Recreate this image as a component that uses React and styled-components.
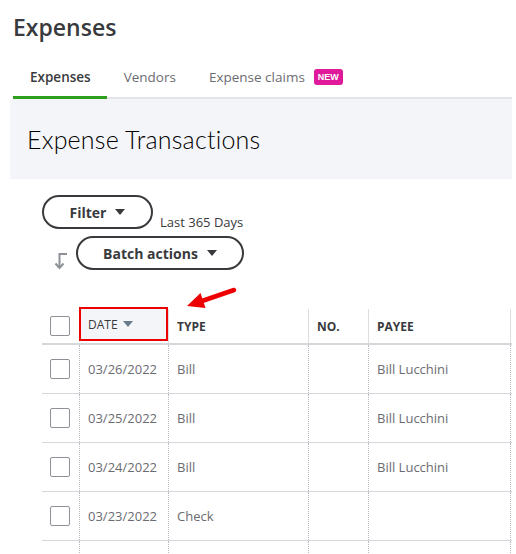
import React from "react"
import styled, { createGlobalStyle } from "styled-components"

const GlobalStyle = createGlobalStyle`
  body {
    margin: 0;
    background: #fff;
    font-family: "Open Sans", "Liberation Sans", sans-serif;
    color: #393a3d;
  }
`

const rows = [
  { date: "03/26/2022", type: "Bill", no: "", payee: "Bill Lucchini" },
  { date: "03/25/2022", type: "Bill", no: "", payee: "Bill Lucchini" },
  { date: "03/24/2022", type: "Bill", no: "", payee: "Bill Lucchini" },
  { date: "03/23/2022", type: "Check", no: "", payee: "" },
  { date: "", type: "", no: "", payee: "" },
]

const columns = "37px 89px 140px 60px 142px 1fr"

const Page = styled.div`
  position: relative;
  width: 516px;
  height: 554px;
  overflow: hidden;
`
const PageTitle = styled.h1`
  margin: 0;
  padding: 12px 0 0 13px;
  height: 42px;
  box-sizing: border-box;
  font-size: 23px;
  font-weight: 600;
  line-height: 30px;
  color: #393a3d;
`
const TabBar = styled.div`
  display: flex;
  align-items: stretch;
  margin: 16px 4px 0 13px;
  border-bottom: 2px solid #e3e5e8;
  height: 41px;
  box-sizing: border-box;
`
const Tab = styled.div`
  display: flex;
  align-items: center;
  gap: 9px;
  padding: 0 16px 0 17px;
  font-size: 13.5px;
  font-weight: ${p => (p.$active ? 600 : 400)};
  color: ${p => (p.$active ? "#393a3d" : "#6b6c72")};
  border-bottom: ${p => (p.$active ? "3px solid #2ca01c" : "3px solid transparent")};
  margin-bottom: -2px;
`
const NewBadge = styled.span`
  background: #e0199b;
  color: #fff;
  font-size: 9px;
  font-weight: 700;
  line-height: 16px;
  padding: 0 4px;
  border-radius: 3px;
  font-family: "Liberation Sans", Arial, sans-serif;
`
const Banner = styled.div`
  margin: 0 4px 0 10px;
  height: 80px;
  background: #f4f5f8;
  display: flex;
  align-items: center;
  padding-left: 17px;
`
const BannerTitle = styled.h2`
  margin: 0;
  font-family: Lato, "Open Sans", sans-serif;
  font-size: 25px;
  font-weight: 300;
  color: #000;
  letter-spacing: 0.2px;
`
const Controls = styled.div`
  display: flex;
  flex-direction: column;
  gap: 7px;
  padding: 16px 0 0 42px;
`
const ControlRow = styled.div`
  display: flex;
  align-items: ${p => p.$align || "center"};
  gap: ${p => p.$gap || 9}px;
`
const PillButton = styled.button`
  display: flex;
  align-items: center;
  justify-content: center;
  gap: 9px;
  width: ${p => p.$width}px;
  height: 34px;
  border: 2px solid #393a3d;
  border-radius: 17px;
  background: #fff;
  font-family: "Open Sans", sans-serif;
  font-size: 14px;
  font-weight: 700;
  color: #393a3d;
  padding: 0;
`
const Caret = styled.span`
  width: 0;
  height: 0;
  border-left: 5px solid transparent;
  border-right: 5px solid transparent;
  border-top: 6px solid ${p => p.$color || "#393a3d"};
`
const RangeLabel = styled.span`
  font-size: 13px;
  color: #393a3d;
  margin-bottom: -2px;
`
const SortIcon = styled.svg`
  margin: 16px 0 0 12px;
  flex-shrink: 0;
`
const Table = styled.div`
  margin: 37px 4px 0 42px;
`
const HeaderRow = styled.div`
  display: grid;
  grid-template-columns: ${columns};
  height: 38px;
  border-bottom: 2px solid #d4d7dc;
  box-sizing: border-box;
`
const HeadCell = styled.div`
  display: flex;
  align-items: center;
  gap: 5px;
  padding-left: 8px;
  margin-top: 2px;
  font-size: 12px;
  font-weight: ${p => (p.$sorted ? 400 : 700)};
  color: #393a3d;
  border-left: ${p => (p.$first ? "none" : "1px solid #dcdee0")};
  ${p =>
    p.$sorted &&
    `
    background: #f4f5f8;
    outline: 2px solid #ee0000;
    outline-offset: -2px;
    margin-top: 0;
    margin-bottom: 2px;
  `}
`
const BodyRow = styled.div`
  display: grid;
  grid-template-columns: ${columns};
  height: 49px;
  border-bottom: 1px solid #d4d7dc;
  box-sizing: border-box;
`
const Cell = styled.div`
  display: flex;
  align-items: center;
  padding-left: 8px;
  font-size: 13px;
  color: #6b6c72;
  border-left: ${p => (p.$first ? "none" : "1px dotted #b9bbbf")};
`
const Checkbox = styled.span`
  width: 18px;
  height: 18px;
  border: 1px solid #8d9096;
  border-radius: 2px;
  background: #fff;
`
const Pointer = styled.svg`
  position: absolute;
  left: 180px;
  top: 283px;
`

const ArrowPointer = () => (
  <Pointer width="60" height="30" viewBox="0 0 60 30">
    <line x1="54" y1="7" x2="22" y2="18" stroke="#ee0000" strokeWidth="4.5" strokeLinecap="round" />
    <polygon points="7,23 25.5,25 20.5,10" fill="#ee0000" />
  </Pointer>
)

export default function App() {
  return (
    <Page>
      <GlobalStyle />
      <PageTitle>Expenses</PageTitle>
      <TabBar>
        <Tab $active>Expenses</Tab>
        <Tab>Vendors</Tab>
        <Tab>
          Expense claims <NewBadge>NEW</NewBadge>
        </Tab>
      </TabBar>
      <Banner>
        <BannerTitle>Expense Transactions</BannerTitle>
      </Banner>
      <Controls>
        <ControlRow $align="flex-end" $gap={7}>
          <PillButton $width={111}>
            Filter <Caret />
          </PillButton>
          <RangeLabel>Last 365 Days</RangeLabel>
        </ControlRow>
        <ControlRow $gap={8}>
          <SortIcon width="14" height="18" viewBox="0 0 14 18">
            <path d="M13 2H5.5V15" fill="none" stroke="#8d9096" strokeWidth="2" />
            <path d="M1.5 11.5L5.5 16L9.5 11.5" fill="none" stroke="#8d9096" strokeWidth="2" />
          </SortIcon>
          <PillButton $width={168}>
            Batch actions <Caret />
          </PillButton>
        </ControlRow>
      </Controls>
      <Table>
        <HeaderRow>
          <HeadCell $first>
            <Checkbox />
          </HeadCell>
          <HeadCell $sorted>
            DATE <Caret $color="#6b7a8c" />
          </HeadCell>
          <HeadCell>TYPE</HeadCell>
          <HeadCell>NO.</HeadCell>
          <HeadCell>PAYEE</HeadCell>
          <HeadCell />
        </HeaderRow>
        {rows.map((r, i) => (
          <BodyRow key={i}>
            <Cell $first>{r.date && <Checkbox />}</Cell>
            <Cell>{r.date}</Cell>
            <Cell>{r.type}</Cell>
            <Cell>{r.no}</Cell>
            <Cell>{r.payee}</Cell>
            <Cell />
          </BodyRow>
        ))}
      </Table>
      <ArrowPointer />
    </Page>
  )
}
